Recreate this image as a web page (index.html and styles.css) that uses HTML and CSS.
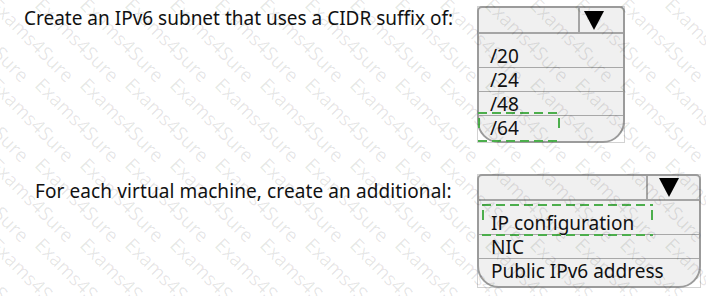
FILE: index.html
```html
<!DOCTYPE html>
<html lang="en">
<head>
  <meta charset="UTF-8" />
  <meta name="viewport" content="width=device-width, initial-scale=1.0" />
  <title>IPv6 subnet question</title>
  <link rel="stylesheet" href="styles.css">
</head>
<body>
  <div class="question">
    <div class="row row-suffix">
      <p class="prompt">Create an IPv6 subnet that uses a CIDR suffix of:</p>
      <div class="frame">
        <div class="dropdown dropdown-suffix">
          <div class="dd-head">
            <span class="dd-value"></span>
            <span class="dd-arrow"><span class="triangle"></span></span>
          </div>
          <ul class="dd-list">
            <li>/20</li>
            <li>/24</li>
            <li>/48</li>
            <li class="answer">/64</li>
          </ul>
        </div>
      </div>
    </div>

    <div class="row row-extra">
      <p class="prompt">For each virtual machine, create an additional:</p>
      <div class="frame">
        <div class="dropdown dropdown-extra">
          <div class="dd-head">
            <span class="dd-value"></span>
            <span class="dd-arrow"><span class="triangle"></span></span>
          </div>
          <ul class="dd-list">
            <li class="answer">IP configuration</li>
            <li>NIC</li>
            <li>Public IPv6 address</li>
          </ul>
        </div>
      </div>
    </div>
  </div>

  <div class="watermark-wrap">
    <div class="watermark" id="watermark"></div>
  </div>

  <script>
    // fill the watermark grid
    const wm = document.getElementById('watermark');
    for (let i = 0; i < 4 * 19; i++) {
      const cell = document.createElement('div');
      cell.className = 'wm-cell';
      cell.innerHTML = '<span>Exams4Sure</span>';
      wm.appendChild(cell);
    }
  </script>
</body>
</html>
```

FILE: styles.css
```css
* { box-sizing: border-box; }
body {
  margin: 0;
  width: 706px;
  height: 296px;
  position: relative;
  overflow: hidden;
  background: #fff;
  color: #111;
  font-family: "Noto Sans", "Open Sans", sans-serif;
}
.question { padding-top: 6px; }
.row {
  display: flex;
  align-items: flex-start;
}
.row-extra { margin-top: 31px; }
.prompt {
  width: 477px;
  margin: 0;
  font-size: 19px;
  line-height: 28px;
  white-space: nowrap;
}
.row-suffix .prompt { padding-left: 24px; margin-top: -2px; }
.row-extra .prompt { padding-left: 35px; padding-top: 3px; letter-spacing: 0.1px; }

.frame { border: 1px solid #d2d2d2; }
.dropdown {
  margin: -1px;
  border: 2px solid #9b9b9b;
  border-radius: 5px 5px 22px 22px;
  background: #f0f0f0;
  font-size: 19px;
}
.dropdown-suffix { width: 148px; }
.dropdown-extra { width: 224px; }

.dd-head {
  display: flex;
  height: 26px;
  border-bottom: 2px solid #a5a5a5;
}
.dropdown-extra .dd-head { height: 25px; }
.dd-value { flex: 1; }
.dd-arrow {
  display: flex;
  align-items: center;
  border-left: 2px solid #a5a5a5;
}
.dropdown-suffix .dd-arrow { width: 45px; padding-left: 4px; }
.dropdown-extra .dd-arrow { width: 53px; padding-left: 11px; }
.triangle {
  width: 0;
  height: 0;
  border-left: 10px solid transparent;
  border-right: 10px solid transparent;
  border-top: 19px solid #000;
}

.dd-list {
  list-style: none;
  margin: 0;
  padding: 10px 0 1px;
}
.dd-list li {
  position: relative;
  height: 24px;
  line-height: 24px;
  padding-left: 11px;
  border-bottom: 1px solid #a8a8a8;
}
.dd-list li:last-child { border-bottom: none; }
.dropdown-extra .dd-list { padding: 10px 0 3px; }
.dropdown-extra .dd-list li { padding-left: 12px; }

/* dashed answer box, drawn with gradients for longer dashes */
.answer::after {
  content: "";
  position: absolute;
  --dash: #4cae4c;
  background:
    repeating-linear-gradient(90deg, var(--dash) 0 9px, transparent 9px 14px) top left / 100% 2px no-repeat,
    repeating-linear-gradient(90deg, var(--dash) 0 9px, transparent 9px 14px) bottom left / 100% 2px no-repeat,
    repeating-linear-gradient(180deg, transparent 0 6px, var(--dash) 6px 16px, transparent 16px 32px) top left / 2px 100% no-repeat,
    repeating-linear-gradient(180deg, transparent 0 6px, var(--dash) 6px 16px, transparent 16px 32px) top right / 2px 100% no-repeat;
}
.dropdown-suffix .answer::after { left: -1px; top: -4px; width: 82px; height: 30px; }
.dropdown-extra .answer::after { left: 3px; top: -7px; width: 171px; height: 32px; }

.watermark-wrap {
  position: absolute;
  inset: 0;
  overflow: hidden;
  pointer-events: none;
}
.watermark {
  margin: -5px 0 0 -90px;
  display: grid;
  grid-template-columns: repeat(19, 45px);
  grid-auto-rows: 80px;
}
.wm-cell span {
  display: block;
  transform: rotate(45deg);
  transform-origin: 0 0;
  font-family: "Open Sans", sans-serif;
  font-size: 19px;
  line-height: 1;
  color: rgba(0, 0, 0, 0.1);
  white-space: nowrap;
}
```
